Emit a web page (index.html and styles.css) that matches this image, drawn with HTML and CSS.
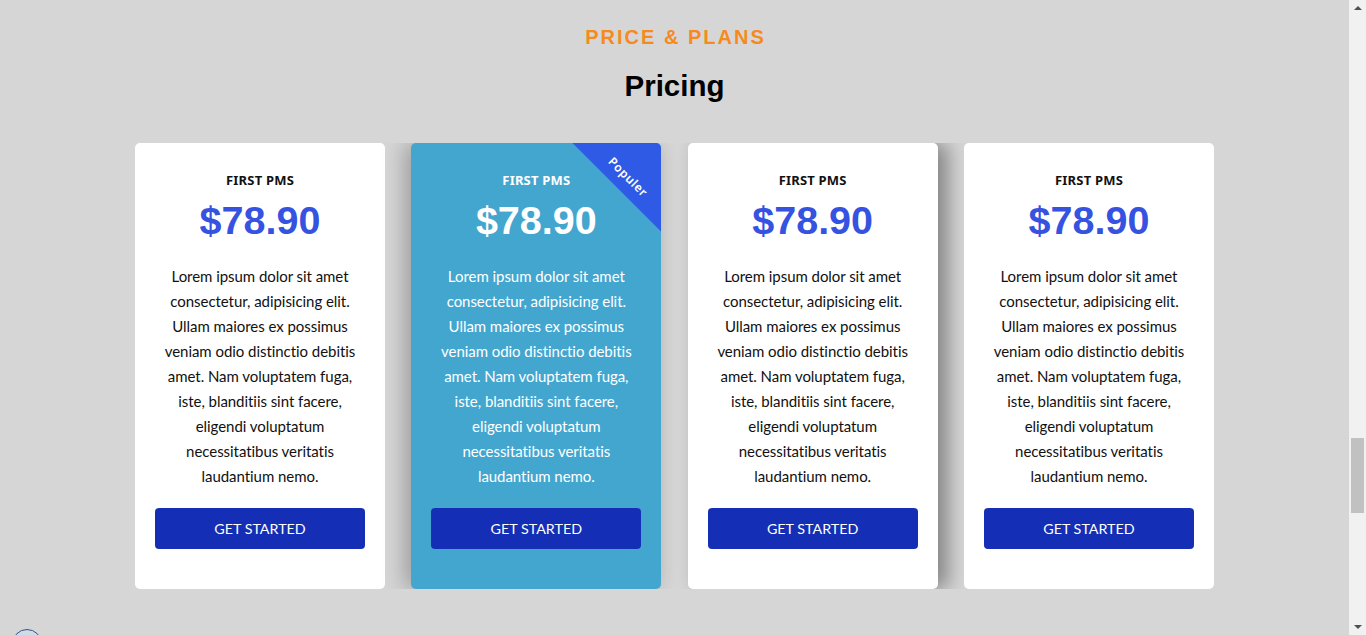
FILE: index.html
```html
<!DOCTYPE html>
<html lang="en">
<head>
<meta charset="utf-8">
<title>Pricing</title>
<link rel="stylesheet" href="styles.css">
</head>
<body>
<div class="page">
  <main class="main">
    <section class="pricing">
      <p class="eyebrow">PRICE &amp; PLANS</p>
      <h2 class="title">Pricing</h2>
      <div class="cards">
        <div class="card">
          <h3 class="plan">FIRST PMS</h3>
          <p class="price">$78.90</p>
          <p class="desc">Lorem ipsum dolor sit amet<br>consectetur, adipisicing elit.<br>Ullam maiores ex possimus<br>veniam odio distinctio debitis<br>amet. Nam voluptatem fuga,<br>iste, blanditiis sint facere,<br>eligendi voluptatum<br>necessitatibus veritatis<br>laudantium nemo.</p>
          <a class="btn" href="#">GET STARTED</a>
        </div>
        <div class="card card-popular">
          <span class="ribbon"><span class="ribbon-text">Populer</span></span>
          <h3 class="plan">FIRST PMS</h3>
          <p class="price">$78.90</p>
          <p class="desc">Lorem ipsum dolor sit amet<br>consectetur, adipisicing elit.<br>Ullam maiores ex possimus<br>veniam odio distinctio debitis<br>amet. Nam voluptatem fuga,<br>iste, blanditiis sint facere,<br>eligendi voluptatum<br>necessitatibus veritatis<br>laudantium nemo.</p>
          <a class="btn" href="#">GET STARTED</a>
        </div>
        <div class="card card-hover">
          <h3 class="plan">FIRST PMS</h3>
          <p class="price">$78.90</p>
          <p class="desc">Lorem ipsum dolor sit amet<br>consectetur, adipisicing elit.<br>Ullam maiores ex possimus<br>veniam odio distinctio debitis<br>amet. Nam voluptatem fuga,<br>iste, blanditiis sint facere,<br>eligendi voluptatum<br>necessitatibus veritatis<br>laudantium nemo.</p>
          <a class="btn" href="#">GET STARTED</a>
        </div>
        <div class="card">
          <h3 class="plan">FIRST PMS</h3>
          <p class="price">$78.90</p>
          <p class="desc">Lorem ipsum dolor sit amet<br>consectetur, adipisicing elit.<br>Ullam maiores ex possimus<br>veniam odio distinctio debitis<br>amet. Nam voluptatem fuga,<br>iste, blanditiis sint facere,<br>eligendi voluptatum<br>necessitatibus veritatis<br>laudantium nemo.</p>
          <a class="btn" href="#">GET STARTED</a>
        </div>
      </div>
    </section>
    <span class="float-btn"></span>
  </main>
  <div class="scrollbar">
    <span class="arrow arrow-up"></span>
    <div class="track">
      <span class="thumb"></span>
    </div>
    <span class="arrow arrow-down"></span>
  </div>
</div>
</body>
</html>
```
FILE: styles.css
```css
* { box-sizing: border-box; }

html, body {
  margin: 0;
  padding: 0;
  height: 635px;
  overflow: hidden;
}

body {
  background: #d6d6d6;
  font-family: "Liberation Sans", Arial, sans-serif;
  color: #111;
}

.page {
  display: flex;
  height: 635px;
}

.main {
  flex: 1;
  min-width: 0;
}

.pricing {
  padding-top: 25px;
  display: flex;
  flex-direction: column;
  align-items: center;
}

.eyebrow {
  margin: 0;
  font-family: "Liberation Sans", Arial, sans-serif;
  font-weight: 700;
  font-size: 20px;
  line-height: 24px;
  letter-spacing: 2px;
  color: #f68a1e;
  text-align: center;
  padding-left: 2px;
}

.title {
  margin: 20px 0 0;
  font-family: "Liberation Sans", Arial, sans-serif;
  font-weight: 700;
  font-size: 29.5px;
  line-height: 34px;
  color: #000;
  text-align: center;
}

.cards {
  margin-top: 40px;
  display: grid;
  grid-template-columns: repeat(4, 250px);
  column-gap: 26.33px;
  overflow: hidden;
}

.card {
  position: relative;
  background: #fff;
  border-radius: 5px;
  padding: 28px 20px 40px;
  display: flex;
  flex-direction: column;
  align-items: center;
  text-align: center;
  overflow: hidden;
}

.card-popular {
  background: #43a6cf;
  color: #fff;
  box-shadow: -6px 0 22px rgba(0, 0, 0, 0.28);
}

.card-hover {
  box-shadow: 10px 0 20px rgba(0, 0, 0, 0.38);
}

.plan {
  margin: 0;
  font-family: "Noto Sans", sans-serif;
  font-weight: 700;
  font-size: 13px;
  line-height: 18px;
  letter-spacing: 0.2px;
}

.price {
  margin: 8px 0 0;
  font-family: "Liberation Sans", Arial, sans-serif;
  font-weight: 700;
  font-size: 39.5px;
  line-height: 46px;
  color: #3652e0;
}

.card-popular .price { color: #fff; }

.desc {
  margin: 21px 0 0;
  font-family: Lato, "Noto Sans", sans-serif;
  font-size: 15px;
  line-height: 25px;
  white-space: nowrap;
  letter-spacing: -0.05px;
}

.btn {
  margin-top: 19px;
  width: 210px;
  height: 41px;
  display: flex;
  align-items: center;
  justify-content: center;
  background: #142fb6;
  color: #fff;
  border-radius: 4px;
  text-decoration: none;
  font-family: Lato, "Noto Sans", sans-serif;
  font-size: 14.3px;
}

.ribbon {
  position: absolute;
  left: 131px;
  top: -15px;
  width: 200px;
  height: 70px;
  background: #2e5ae6;
  transform: rotate(45deg);
  display: flex;
  align-items: flex-end;
  justify-content: center;
}

.ribbon-text {
  font-family: "Noto Sans", sans-serif;
  font-size: 12px;
  line-height: 30px;
  font-weight: 600;
  letter-spacing: 0.6px;
  color: #fff;
}

.float-btn {
  position: fixed;
  left: 12px;
  top: 629px;
  width: 30px;
  height: 30px;
  border-radius: 50%;
  border: 1.5px solid #2f5588;
  background: #cfdbe6;
}

.scrollbar {
  width: 17px;
  flex: none;
  background: #f1f1f1;
  display: flex;
  flex-direction: column;
  align-items: center;
}

.arrow {
  width: 0;
  height: 0;
  border-left: 4px solid transparent;
  border-right: 4px solid transparent;
  margin: 6px 0;
}

.arrow-up {
  border-bottom: 4px solid #505050;
}

.arrow-down {
  border-top: 4px solid #505050;
}

.track {
  flex: 1;
  width: 100%;
  display: flex;
  flex-direction: column;
  align-items: center;
  padding-top: 422px;
}

.thumb {
  width: 13px;
  height: 75px;
  background: #c1c1c1;
}
```
